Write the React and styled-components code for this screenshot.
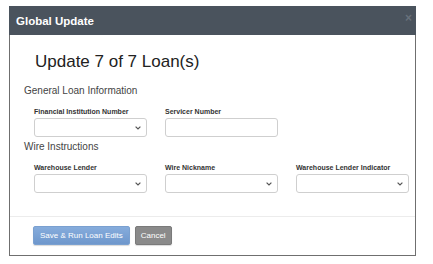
import React from "react";
import styled, { createGlobalStyle } from "styled-components";

const Global = createGlobalStyle`
  html, body { margin: 0; padding: 0; background: #ffffff; }
  body { font-family: "Liberation Sans", Arial, sans-serif; color: #333; }
`;

const Page = styled.div`
  width: 433px;
  height: 264px;
  padding: 6px 0 0 9px;
  box-sizing: border-box;
`;

const Dialog = styled.div`
  width: 407px;
  height: 250px;
  box-sizing: border-box;
  border: 1px solid #6f6f6f;
  border-top: none;
  display: flex;
  flex-direction: column;
  background: #fff;
`;

const Header = styled.div`
  height: 29px;
  margin: 0 -1px;
  background: #4a535d;
  display: flex;
  align-items: center;
  justify-content: space-between;
  padding: 0 4px 0 7px;
`;

const HeaderTitle = styled.div`
  font-size: 11.5px;
  font-weight: bold;
  color: #ffffff;
`;

const Close = styled.span`
  font-size: 12px;
  font-weight: bold;
  color: #68717b;
  line-height: 1;
  margin-top: -5px;
`;

const Body = styled.div`
  flex: 1;
  padding: 17px 14px 0 14px;
`;

const Title = styled.h1`
  margin: 0 0 13px 11px;
  font-size: 17px;
  line-height: 20px;
  font-weight: normal;
  color: #222;
`;

const SectionTitle = styled.h2`
  margin: 0 0 10px 0;
  font-size: 10px;
  line-height: 12px;
  font-weight: normal;
  color: #444;
`;

const FieldRow = styled.div`
  display: grid;
  grid-template-columns: repeat(3, 113px);
  column-gap: 18px;
  padding-left: 10px;
  margin-bottom: 4px;
`;

const Field = styled.div`
  display: flex;
  flex-direction: column;
  gap: 2px;
`;

const Label = styled.label`
  font-size: 7px;
  line-height: 9px;
  font-weight: bold;
  color: #333;
`;

const Box = styled.div`
  height: 19px;
  box-sizing: border-box;
  border: 1px solid #cfcfcf;
  border-radius: 3px;
  background: #fff;
  display: flex;
  align-items: center;
  justify-content: flex-end;
  padding-right: 5px;
`;

const Chevron = () => (
  <svg width="6" height="4" viewBox="0 0 6 4">
    <path d="M0.6 0.6 L3 3 L5.4 0.6" fill="none" stroke="#555" strokeWidth="1.2" />
  </svg>
);

const Footer = styled.div`
  border-top: 1px solid #ececec;
  padding: 9px 24px 10px 23px;
  display: flex;
  gap: 5px;
`;

const Button = styled.button`
  height: 19px;
  padding: 0 ${(p) => (p.$primary ? "6px" : "5px")};
  border-radius: 2px;
  border: 1px solid ${(p) => (p.$primary ? "#7aa0d0" : "#7a7a7a")};
  background: ${(p) =>
    p.$primary
      ? "linear-gradient(#86acdc, #6e97cc)"
      : "#8a8a8a"};
  color: #fff;
  font-family: "Liberation Sans", Arial, sans-serif;
  font-size: 8px;
  line-height: 1;
  box-shadow: 0 1px 1px rgba(0, 0, 0, 0.15);
`;

function SelectField({ label, select }) {
  return (
    <Field>
      <Label>{label}</Label>
      <Box>{select && <Chevron />}</Box>
    </Field>
  );
}

export default function App() {
  return (
    <>
      <Global />
      <Page>
        <Dialog>
          <Header>
            <HeaderTitle>Global Update</HeaderTitle>
            <Close>×</Close>
          </Header>
          <Body>
            <Title>Update 7 of 7 Loan(s)</Title>
            <SectionTitle>General Loan Information</SectionTitle>
            <FieldRow>
              <SelectField label="Financial Institution Number" select />
              <SelectField label="Servicer Number" />
            </FieldRow>
            <SectionTitle>Wire Instructions</SectionTitle>
            <FieldRow>
              <SelectField label="Warehouse Lender" select />
              <SelectField label="Wire Nickname" select />
              <SelectField label="Warehouse Lender Indicator" select />
            </FieldRow>
          </Body>
          <Footer>
            <Button $primary>Save &amp; Run Loan Edits</Button>
            <Button>Cancel</Button>
          </Footer>
        </Dialog>
      </Page>
    </>
  );
}
